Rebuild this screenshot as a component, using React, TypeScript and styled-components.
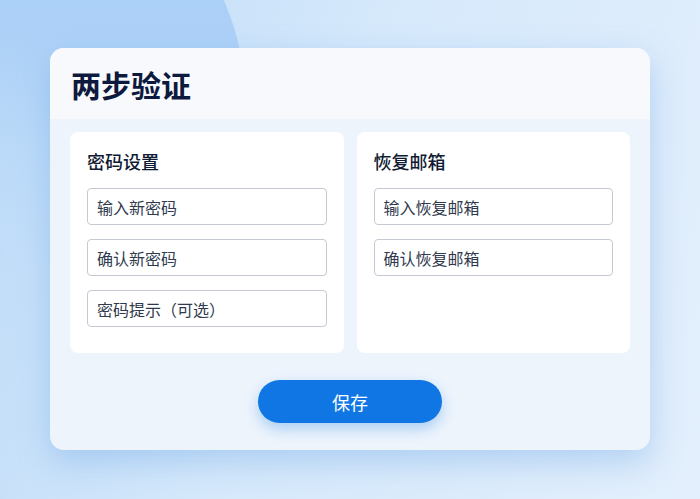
import React from 'react';
import styled, { createGlobalStyle } from 'styled-components';

const GlobalStyle = createGlobalStyle`
  html, body {
    margin: 0;
    padding: 0;
  }
  body {
    font-family: "Noto Sans CJK SC", "Noto Sans", sans-serif;
  }
`;

const Page = styled.div`
  position: relative;
  width: 700px;
  height: 499px;
  overflow: hidden;
  background: linear-gradient(110deg, #bcdaf8 0%, #d6e9fb 45%, #e3effc 100%);
  padding-top: 48px;
  box-sizing: border-box;
`;

const Blob = styled.div`
  position: absolute;
  left: -245px;
  top: -145px;
  width: 490px;
  height: 490px;
  border-radius: 50%;
  background: linear-gradient(
    180deg,
    #a6cdf6 0%,
    #acd0f7 35%,
    rgba(182, 215, 248, 0.5) 60%,
    rgba(188, 218, 248, 0) 85%
  );
`;

const Card = styled.div`
  position: relative;
  margin: 0 auto;
  width: 600px;
  height: 402px;
  border-radius: 14px;
  overflow: hidden;
  background: #edf4fc;
  box-shadow: 0 12px 32px rgba(100, 160, 230, 0.38);
  display: flex;
  flex-direction: column;
`;

const Header = styled.div`
  height: 71px;
  box-sizing: border-box;
  padding: 14px 21px 0;
  background: #f7f9fd;
`;

const Title = styled.h1`
  margin: 0;
  font-size: 30px;
  line-height: 44px;
  font-weight: 600;
  color: #0e1a3d;
`;

const Body = styled.div`
  padding: 13px 20px 27px;
  display: flex;
  flex-direction: column;
  align-items: center;
`;

const Columns = styled.div`
  width: 100%;
  display: grid;
  grid-template-columns: 1fr 1fr;
  gap: 13px;
`;

const Panel = styled.div`
  background: #ffffff;
  border-radius: 8px;
  padding: 16px 17px 25px;
  height: 221px;
  box-sizing: border-box;
  display: flex;
  flex-direction: column;
`;

const PanelTitle = styled.h2`
  margin: 0 0 14px;
  font-size: 18px;
  line-height: 26px;
  font-weight: 500;
  color: #111a33;
`;

const Fields = styled.div`
  display: flex;
  flex-direction: column;
  gap: 14px;
`;

const Field = styled.div`
  height: 37px;
  box-sizing: border-box;
  border: 1px solid #c5c9d3;
  border-radius: 4px;
  padding: 0 9px;
  display: flex;
  align-items: center;
  font-size: 16px;
  color: #303a4e;
  background: #fff;
`;

const SaveButton = styled.button`
  margin-top: 27px;
  width: 184px;
  height: 43px;
  border: none;
  border-radius: 22px;
  background: #1076e4;
  color: #ffffff;
  font-family: "Noto Sans CJK SC", sans-serif;
  font-size: 18px;
  box-shadow: 0 6px 14px rgba(16, 118, 228, 0.3);
  cursor: pointer;
`;

const passwordFields = ['输入新密码', '确认新密码', '密码提示（可选）'];
const emailFields = ['输入恢复邮箱', '确认恢复邮箱'];

const App = () => {
  return (
    <>
      <GlobalStyle />
      <Page>
        <Blob />
        <Card>
          <Header>
            <Title>两步验证</Title>
          </Header>
          <Body>
            <Columns>
              <Panel>
                <PanelTitle>密码设置</PanelTitle>
                <Fields>
                  {passwordFields.map((f) => (
                    <Field key={f}>{f}</Field>
                  ))}
                </Fields>
              </Panel>
              <Panel>
                <PanelTitle>恢复邮箱</PanelTitle>
                <Fields>
                  {emailFields.map((f) => (
                    <Field key={f}>{f}</Field>
                  ))}
                </Fields>
              </Panel>
            </Columns>
            <SaveButton>保存</SaveButton>
          </Body>
        </Card>
      </Page>
    </>
  );
};

export default App;
